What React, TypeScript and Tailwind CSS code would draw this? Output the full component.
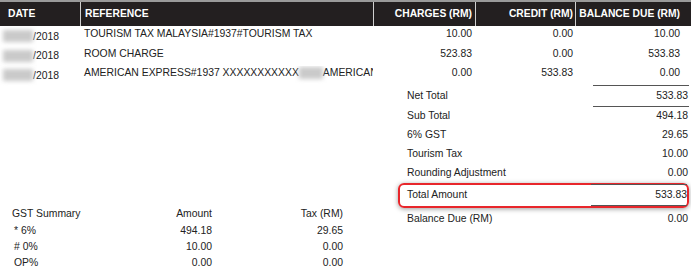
import React from "react";

const F = { fontFamily: '"Liberation Sans", Arial, sans-serif' };

function Blur({ w }: { w: number }) {
  return (
    <span
      className="inline-block h-[12px] bg-[#cacaca] blur-[2px] align-middle"
      style={{ width: w }}
    />
  );
}

const rows = [
  { ref: "TOURISM TAX MALAYSIA#1937#TOURISM TAX", c: "10.00", cr: "0.00", b: "10.00" },
  { ref: "ROOM CHARGE", c: "523.83", cr: "0.00", b: "533.83" },
  { ref: "AMEX", c: "0.00", cr: "533.83", b: "0.00" },
];

export default function App() {
  return (
    <div className="w-[691px] h-[278px] bg-white text-[#222] text-[10.4px] overflow-hidden" style={F}>
      {/* header */}
      <div className="h-[26px] border-t-2 border-[#9a9a9a] bg-[#231f20] text-white font-bold flex items-center text-[10.3px] whitespace-nowrap">
        <div className="w-[80px] pl-[8px] h-full flex items-center">DATE</div>
        <div className="w-[293px] pl-[4px] h-full flex items-center border-l border-[#d0d0d0]">REFERENCE</div>
        <div className="w-[102px] pr-[3px] h-full flex items-center justify-end border-l border-[#d0d0d0]">CHARGES (RM)</div>
        <div className="w-[100px] pr-[2px] h-full flex items-center justify-end border-l border-[#d0d0d0]">CREDIT (RM)</div>
        <div className="w-[106px] pr-[1px] h-full flex items-center justify-end border-l border-[#d0d0d0]">BALANCE DUE (RM)</div>
      </div>
      {/* rows */}
      {rows.map((r, i) => (
        <div key={i} className="h-[19.5px] pt-[1px] flex leading-[13px] whitespace-nowrap">
          <div className="w-[80px] pl-[3px] flex items-center">
            <Blur w={30} />
            <span>/2018</span>
          </div>
          <div className="w-[293px] pl-[4px] overflow-hidden">
            {r.ref === "AMEX" ? (
              <>
                AMERICAN EXPRESS#1937 XXXXXXXXXXX<Blur w={24} />AMERICAN
              </>
            ) : (
              r.ref
            )}
          </div>
          <div className="w-[102px] pr-[3px] text-right">{r.c}</div>
          <div className="w-[100px] pr-[2px] text-right">{r.cr}</div>
          <div className="w-[106px] pr-[1px] text-right">{r.b}</div>
        </div>
      ))}
      {/* bottom */}
      <div className="flex">
        <div className="w-[398px] pt-[121px]">
          <div className="flex h-[17px] items-center">
            <div className="w-[100px] pl-[12px]">GST Summary</div>
            <div className="w-[112px] text-right">Amount</div>
            <div className="w-[131px] text-right">Tax (RM)</div>
          </div>
          {[
            ["* 6%", "494.18", "29.65"],
            ["# 0%", "10.00", "0.00"],
            ["OP%", "0.00", "0.00"],
          ].map((g, i) => (
            <div key={i} className="flex h-[16px] items-center">
              <div className="w-[100px] pl-[14px]">{g[0]}</div>
              <div className="w-[112px] text-right">{g[1]}</div>
              <div className="w-[131px] text-right">{g[2]}</div>
            </div>
          ))}
        </div>
        <div className="w-[291px]">
          <div className="h-[22px] flex items-center">
            <div className="pl-[9px] flex-1">Net Total</div>
            <div className="w-[96px] h-full flex items-center justify-end border-y border-[#555] pr-[1px]">533.83</div>
          </div>
          {[
            ["Sub Total", "494.18"],
            ["6% GST", "29.65"],
            ["Tourism Tax", "10.00"],
            ["Rounding Adjustment", "0.00"],
          ].map((t, i) => (
            <div key={i} className="h-[19px] flex items-center">
              <div className="pl-[9px] flex-1">{t[0]}</div>
              <div className="pr-[1px]">{t[1]}</div>
            </div>
          ))}
          <div className="h-[25px] flex items-center rounded-[6px] border-2 border-[#e8262b] shadow-[0_1px_5px_rgba(0,0,0,0.4)]">
            <div className="pl-[7px] flex-1">Total Amount</div>
            <div className="w-[96px] h-[22px] flex items-center justify-end border-y border-[#555]">533.83</div>
          </div>
          <div className="h-[22px] flex items-center">
            <div className="pl-[9px] flex-1">Balance Due (RM)</div>
            <div className="pr-[1px]">0.00</div>
          </div>
        </div>
      </div>
    </div>
  );
}
